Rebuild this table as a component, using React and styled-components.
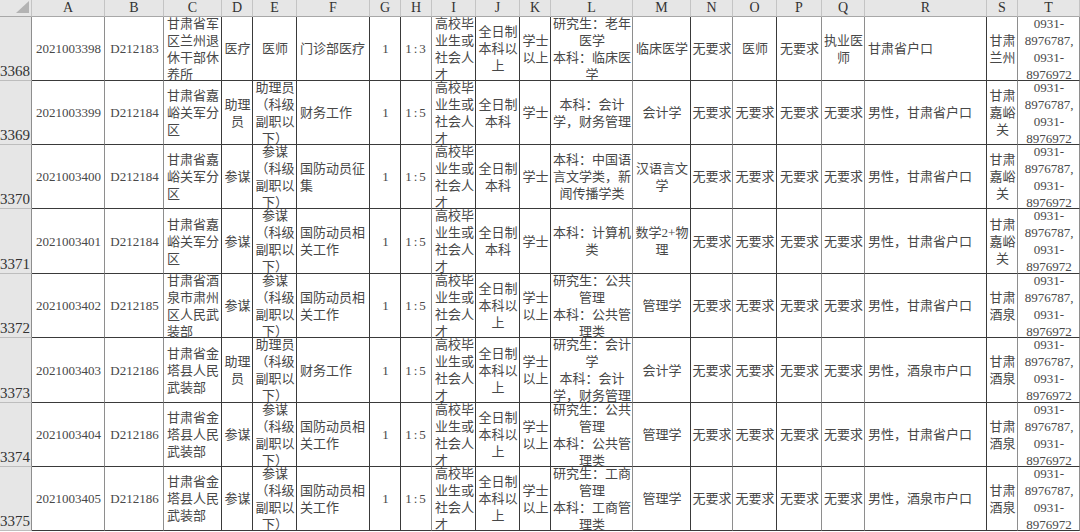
import React from 'react';
import styled, { createGlobalStyle } from 'styled-components';

const DARK = '#3a3a3a';
const MID = '#8e8e8e';

const GlobalStyle = createGlobalStyle`
  html, body {
    margin: 0;
    padding: 0;
    background: #ffffff;
    overflow: hidden;
  }
`;

// column letter, width, text align, colour of its right-hand grid line, letter spacing
const columns = [
  { key: 'A', w: 73, align: 'center', edge: MID },
  { key: 'B', w: 59, align: 'center', edge: MID },
  { key: 'C', w: 58, align: 'left', edge: DARK },
  { key: 'D', w: 31, align: 'center', edge: DARK },
  { key: 'E', w: 44, align: 'center', edge: DARK },
  { key: 'F', w: 73, align: 'left', edge: DARK },
  { key: 'G', w: 31, align: 'center', edge: DARK },
  { key: 'H', w: 31, align: 'center', edge: MID, track: 2 },
  { key: 'I', w: 44, align: 'left', edge: DARK },
  { key: 'J', w: 44, align: 'center', edge: DARK },
  { key: 'K', w: 31, align: 'center', edge: DARK },
  { key: 'L', w: 82, align: 'center', edge: MID },
  { key: 'M', w: 58, align: 'center', edge: DARK },
  { key: 'N', w: 42, align: 'center', edge: MID },
  { key: 'O', w: 44, align: 'center', edge: DARK },
  { key: 'P', w: 45, align: 'center', edge: MID },
  { key: 'Q', w: 43, align: 'center', edge: MID },
  { key: 'R', w: 122, align: 'left', edge: DARK },
  { key: 'S', w: 31, align: 'center', edge: MID },
  { key: 'T', w: 62, align: 'center', edge: MID },
];

const SCHOOL = '高校毕\n业生或\n社会人\n才';
const PHONE = '0931-\n8976787,\n0931-\n8976972';
const CLERK = '助理员\n（科级\n副职以\n下）';
const STAFF = '参谋\n（科级\n副职以\n下）';
const NONE = '无要求';

const rows = [
  {
    no: 3368,
    cells: ['2021003398', 'D212183', '甘肃省军\n区兰州退\n休干部休\n养所', '医疗', '医师', '门诊部医疗', '1', '1:3', SCHOOL,
      '全日制\n本科以\n上', '学士\n以上', '研究生：老年\n医学\n本科：临床医\n学', '临床医学', NONE, '医师', NONE, '执业医\n师',
      '甘肃省户口', '甘肃\n兰州', PHONE],
  },
  {
    no: 3369,
    cells: ['2021003399', 'D212184', '甘肃省嘉\n峪关军分\n区', '助理\n员', CLERK, '财务工作', '1', '1:5', SCHOOL,
      '全日制\n本科', '学士', '本科：会计\n学，财务管理', '会计学', NONE, NONE, NONE, NONE,
      '男性，甘肃省户口', '甘肃\n嘉峪\n关', PHONE],
  },
  {
    no: 3370,
    cells: ['2021003400', 'D212184', '甘肃省嘉\n峪关军分\n区', '参谋', STAFF, '国防动员征\n集', '1', '1:5', SCHOOL,
      '全日制\n本科', '学士', '本科：中国语\n言文学类，新\n闻传播学类', '汉语言文\n学', NONE, NONE, NONE, NONE,
      '男性，甘肃省户口', '甘肃\n嘉峪\n关', PHONE],
  },
  {
    no: 3371,
    cells: ['2021003401', 'D212184', '甘肃省嘉\n峪关军分\n区', '参谋', STAFF, '国防动员相\n关工作', '1', '1:5', SCHOOL,
      '全日制\n本科', '学士', '本科：计算机\n类', '数学2+物\n理', NONE, NONE, NONE, NONE,
      '男性，甘肃省户口', '甘肃\n嘉峪\n关', PHONE],
  },
  {
    no: 3372,
    cells: ['2021003402', 'D212185', '甘肃省酒\n泉市肃州\n区人民武\n装部', '参谋', STAFF, '国防动员相\n关工作', '1', '1:5', SCHOOL,
      '全日制\n本科以\n上', '学士\n以上', '研究生：公共\n管理\n本科：公共管\n理类', '管理学', NONE, NONE, NONE, NONE,
      '男性，甘肃省户口', '甘肃\n酒泉', PHONE],
  },
  {
    no: 3373,
    cells: ['2021003403', 'D212186', '甘肃省金\n塔县人民\n武装部', '助理\n员', CLERK, '财务工作', '1', '1:5', SCHOOL,
      '全日制\n本科以\n上', '学士\n以上', '研究生：会计\n学\n本科：会计\n学，财务管理', '会计学', NONE, NONE, NONE, NONE,
      '男性，酒泉市户口', '甘肃\n酒泉', PHONE],
  },
  {
    no: 3374,
    cells: ['2021003404', 'D212186', '甘肃省金\n塔县人民\n武装部', '参谋', STAFF, '国防动员相\n关工作', '1', '1:5', SCHOOL,
      '全日制\n本科以\n上', '学士\n以上', '研究生：公共\n管理\n本科：公共管\n理类', '管理学', NONE, NONE, NONE, NONE,
      '男性，甘肃省户口', '甘肃\n酒泉', PHONE],
  },
  {
    no: 3375,
    cells: ['2021003405', 'D212186', '甘肃省金\n塔县人民\n武装部', '参谋', STAFF, '国防动员相\n关工作', '1', '1:5', SCHOOL,
      '全日制\n本科以\n上', '学士\n以上', '研究生：工商\n管理\n本科：工商管\n理类', '管理学', NONE, NONE, NONE, NONE,
      '男性，酒泉市户口', '甘肃\n酒泉', PHONE],
  },
];

const Sheet = styled.div`
  display: grid;
  grid-template-columns: 32px ${columns.map((c) => `${c.w}px`).join(' ')};
  grid-template-rows: 17px 64px 64px 64px 65px 64px 65px 64px 64px;
  width: 1080px;
  font-family: "Liberation Serif", "Noto Sans CJK SC", serif;
  background: #ffffff;
`;

const Corner = styled.div`
  background: #e6e6e6;
  border-right: 1px solid #c4c4c4;
  border-bottom: 1px solid #a8a8a8;
  box-sizing: border-box;
  display: flex;
  align-items: flex-start;
  justify-content: flex-end;
`;

const ColHead = styled.div`
  background: #e6e6e6;
  border-right: 1px solid #c4c4c4;
  border-bottom: 1px solid #a8a8a8;
  box-sizing: border-box;
  display: flex;
  align-items: center;
  justify-content: center;
  font-size: 14px;
  color: #333;
  line-height: 16px;
`;

const RowHead = styled.div`
  background: #e6e6e6;
  border-right: 1px solid ${MID};
  border-bottom: 1px solid #bdbdbd;
  box-sizing: border-box;
  display: flex;
  align-items: flex-end;
  justify-content: flex-start;
  font-size: 15px;
  line-height: 16px;
  color: #333;
  overflow: hidden;
  padding-bottom: 1px;
`;

const Cell = styled.div`
  border-right: 1px solid ${(p) => p.$edge};
  border-bottom: 1px solid ${DARK};
  box-sizing: border-box;
  display: flex;
  align-items: center;
  justify-content: ${(p) => (p.$align === 'left' ? 'flex-start' : 'center')};
  overflow: hidden;
  padding: 0 2px 0 3px;
  min-width: 0;
`;

const CellText = styled.div`
  white-space: pre;
  font-size: 13px;
  line-height: 17px;
  color: #484848;
  letter-spacing: ${(p) => p.$track || 0}px;
  text-align: ${(p) => p.$align};
  flex-shrink: 0;
`;

function CornerMark() {
  return (
    <svg width="16" height="16" viewBox="0 0 16 16">
      <polygon points="1,13 14,13 14,1" fill="#b3b3b3" />
    </svg>
  );
}

export default function App() {
  return (
    <>
      <GlobalStyle />
      <Sheet>
        <Corner>
          <CornerMark />
        </Corner>
        {columns.map((c) => (
          <ColHead key={c.key}>{c.key}</ColHead>
        ))}
        {rows.map((r) => (
          <React.Fragment key={r.no}>
            <RowHead>{r.no}</RowHead>
            {r.cells.map((text, i) => {
              const col = columns[i];
              return (
                <Cell key={col.key} $align={col.align} $edge={col.edge}>
                  <CellText $align={col.align} $track={col.track}>{text}</CellText>
                </Cell>
              );
            })}
          </React.Fragment>
        ))}
      </Sheet>
    </>
  );
}
